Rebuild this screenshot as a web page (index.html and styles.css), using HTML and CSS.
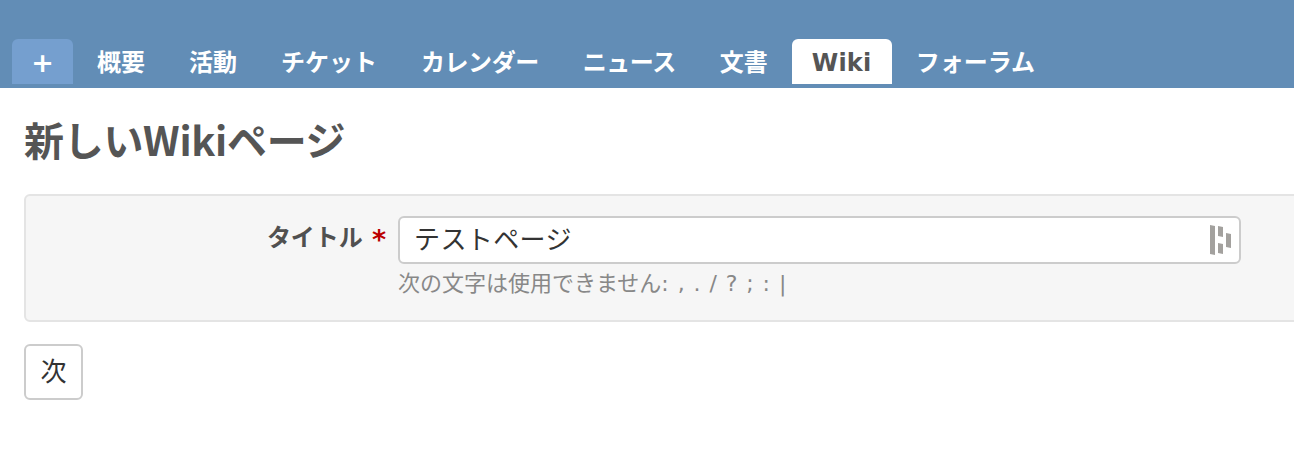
FILE: index.html
```html
<!DOCTYPE html>
<html lang="ja">
<head>
<meta charset="utf-8">
<title>新しいWikiページ</title>
<link rel="stylesheet" href="styles.css">
</head>
<body>
<nav class="main-menu">
  <ul class="tabs">
    <li><a class="tab tab-new" href="#">+</a></li>
    <li><a class="tab" href="#">概要</a></li>
    <li><a class="tab" href="#">活動</a></li>
    <li><a class="tab" href="#">チケット</a></li>
    <li><a class="tab tight" href="#">カレンダー</a></li>
    <li><a class="tab tight" href="#">ニュース</a></li>
    <li><a class="tab" href="#">文書</a></li>
    <li><a class="tab selected" href="#">Wiki</a></li>
    <li><a class="tab" href="#">フォーラム</a></li>
  </ul>
</nav>
<main class="content">
  <h2 class="page-title">新しいWikiページ</h2>
  <form class="wiki-form">
    <div class="box">
      <div class="field">
        <label class="field-label" for="title">タイトル<span class="required">*</span></label>
        <div class="field-body">
          <div class="input-wrap">
            <input class="text-input" id="title" type="text" value="テストページ">
            <svg class="input-icon" width="22" height="30" viewBox="0 0 22 30" aria-hidden="true">
              <path fill="#a3a19e" d="M0 0l5 1v29l-5-1z"/>
              <path fill="#a3a19e" d="M8 1l5 1v10l-5-1zM8 18l5 1v10l-5-1z"/>
              <path fill="#a3a19e" d="M16 8l5 1v14l-5-1z"/>
            </svg>
          </div>
          <p class="hint">次の文字は使用できません: , . / ? ; : |</p>
        </div>
      </div>
    </div>
    <button class="submit" type="button">次</button>
  </form>
</main>
</body>
</html>
```
FILE: styles.css
```css
* { box-sizing: border-box; }
html, body { margin: 0; padding: 0; height: 100%; overflow: hidden; background: #fff; }
body {
  font-family: "DejaVu Sans", "Noto Sans CJK JP", sans-serif;
  color: #484848;
}
.main-menu {
  height: 88px;
  background: #628db6;
  padding: 39px 0 0 12px;
}
.tabs {
  display: flex;
  gap: 4px;
  margin: 0;
  padding: 0;
  list-style: none;
}
.tab {
  display: block;
  height: 45px;
  padding: 0 20px;
  border-radius: 6px 6px 0 0;
  color: #fff;
  font-size: 24px;
  font-weight: 700;
  line-height: 48px;
  text-decoration: none;
}
.tab.tight { letter-spacing: -0.45px; }
.tab-new {
  width: 61px;
  padding: 0;
  background: #759fcf;
  text-align: center;
  font-size: 27px;
}
.tab.selected {
  width: 100px;
  background: #fff;
  color: #555;
  letter-spacing: 0.2px;
}
.content { padding: 0 0 0 24px; }
.page-title {
  margin: 0;
  padding-top: 25px;
  height: 106px;
  font-family: "Noto Sans CJK JP", sans-serif;
  font-size: 40px;
  font-weight: 700;
  line-height: 52px;
  letter-spacing: -0.3px;
  color: #555;
}
.wiki-form { width: 1300px; }
.box {
  height: 128px;
  background: #f6f6f6;
  border: 2px solid #e4e4e4;
  border-radius: 6px;
  padding: 20px 0 0;
}
.field { display: flex; }
.field-label {
  flex: 0 0 372px;
  text-align: right;
  font-size: 24px;
  font-weight: 700;
  line-height: 45px;
  color: #505050;
  padding-right: 12px;
}
.required {
  margin-left: 9px;
  color: #bb0000;
  font-size: 27px;
  line-height: 1;
  vertical-align: -3px;
}
.field-body { width: 843px; }
.input-wrap { position: relative; }
.text-input {
  display: block;
  width: 100%;
  height: 48px;
  padding: 0 48px 6px 14px;
  border: 2px solid #ccc;
  border-radius: 6px;
  background: #fff;
  color: #333;
  font: 400 26px "Noto Sans CJK JP", sans-serif;
  letter-spacing: 0.4px;
  outline: none;
}
.input-icon {
  position: absolute;
  right: 9px;
  top: 9px;
}
.hint {
  margin: 6px 0 0;
  font-size: 22px;
  line-height: 28px;
  word-spacing: 1.9px;
  color: #888;
}
.submit {
  display: block;
  margin-top: 22px;
  width: 59px;
  height: 56px;
  padding: 0 0 6px;
  border: 2px solid #ccc;
  border-radius: 6px;
  background: #fff;
  color: #333;
  font: 400 26px "Noto Sans CJK JP", sans-serif;
}
```
